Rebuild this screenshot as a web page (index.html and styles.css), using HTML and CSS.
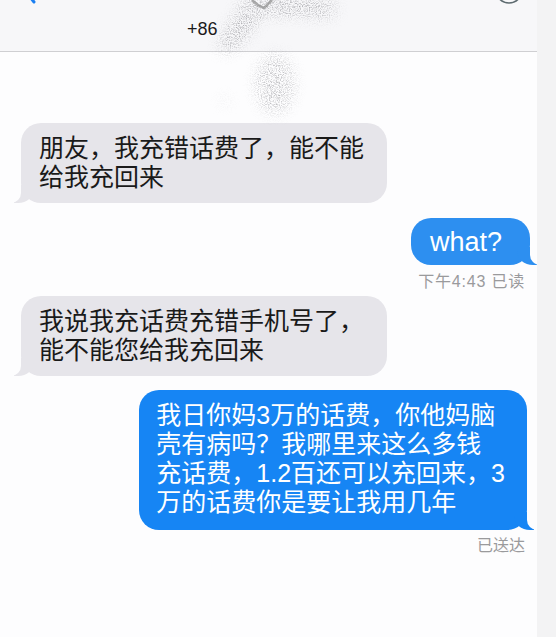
FILE: index.html
```html
<!DOCTYPE html>
<html lang="zh-CN">
<head>
<meta charset="utf-8">
<title>信息</title>
<link rel="stylesheet" href="styles.css">
</head>
<body>
<div class="screen">
  <div class="main">
    <header class="nav">
      <svg class="back" width="20" height="10" viewBox="0 0 20 10"><path d="M4 -8 L12 2" fill="none" stroke="#1b7ff2" stroke-width="3" stroke-linecap="round"/></svg>
      <span class="phone">+86</span>
      <svg class="info" width="34" height="10" viewBox="0 0 34 10"><circle cx="17" cy="-10" r="13" fill="none" stroke="#5e6b70" stroke-width="1.6"/></svg>
    </header>
    <section class="thread">
      <div class="msg them">朋友，我充错话费了，能不能<br>给我充回来</div>
      <div class="msg me short">what?</div>
      <div class="meta read">下午4:43 已读</div>
      <div class="msg them second">我说我充话费充错手机号了，<br>能不能您给我充回来</div>
      <div class="msg me long">我日你妈3万的话费，你他妈脑<br>壳有病吗？我哪里来这么多钱<br>充话费，1.2百还可以充回来，3<br>万的话费你是要让我用几年</div>
      <div class="meta delivered">已送达</div>
    </section>
    <svg class="smudge" width="160" height="125" viewBox="0 0 160 125">
      <defs>
        <filter id="speck" x="-20%" y="-20%" width="140%" height="140%" color-interpolation-filters="sRGB">
          <feTurbulence type="fractalNoise" baseFrequency="0.9" numOctaves="2" seed="11" result="noise"/>
          <feColorMatrix in="noise" type="matrix" values="0 0 0 0 0.55  0 0 0 0 0.55  0 0 0 0 0.57  2.4 0 0 0 -1.0" result="dots"/>
          <feGaussianBlur in="SourceAlpha" stdDeviation="7" result="soft"/>
          <feComposite in="dots" in2="soft" operator="in"/>
        </filter>
      </defs>
      <g filter="url(#speck)" opacity="0.8">
        <ellipse cx="92" cy="6" rx="50" ry="10"/>
        <ellipse cx="125" cy="14" rx="18" ry="5" opacity="0.6"/>
        <ellipse cx="45" cy="28" rx="11" ry="30" transform="rotate(38 45 28)"/>
        <ellipse cx="80" cy="84" rx="19" ry="30" opacity="0.8"/>
        <circle cx="30" cy="101" r="5" opacity="0.4"/>
      </g>
      <path d="M57 0 Q63 6 69 8 Q73 4 77 0" fill="none" stroke="#8a8a8a" stroke-width="2.5" opacity="0.7"/>
    </svg>
  </div>
  <div class="edge"></div>
</div>
</body>
</html>
```
FILE: styles.css
```css
html, body {
  margin: 0;
  padding: 0;
}

body {
  background: #fdfdfe;
  font-family: "Liberation Sans", "Noto Sans CJK SC", sans-serif;
}

.screen {
  display: flex;
  width: 556px;
  height: 637px;
  overflow: hidden;
}

.main {
  position: relative;
  flex: none;
  width: 537px;
  background: #fdfdfe;
  overflow: hidden;
}

.edge {
  flex: 1;
  background: #f3f3f4;
}

.nav {
  position: relative;
  height: 51px;
  background: #f7f7f9;
  border-bottom: 1px solid #cfcfd2;
  box-sizing: content-box;
}

.phone {
  position: absolute;
  left: 187px;
  top: 19px;
  font-size: 18px;
  line-height: 20px;
  color: #1a1a1a;
}

.back {
  position: absolute;
  left: 22px;
  top: 0;
}

.info {
  position: absolute;
  left: 492px;
  top: 0;
}

.thread {
  display: flex;
  flex-direction: column;
  align-items: flex-start;
  padding-top: 71px;
}

.msg {
  position: relative;
  font-size: 25px;
  line-height: 29px;
  border-radius: 20px;
  white-space: nowrap;
}

.msg::before,
.msg::after {
  content: "";
  position: absolute;
  bottom: 0;
}

.them {
  margin-left: 21px;
  width: 330px;
  padding: 11px 18px;
  background: #e6e5ea;
  color: #1a1a1a;
}

.them::before {
  left: -7px;
  width: 20px;
  height: 18px;
  background: #e6e5ea;
  border-bottom-right-radius: 16px 14px;
}

.them::after {
  left: -12px;
  width: 12px;
  height: 20px;
  background: #fdfdfe;
  border-bottom-right-radius: 10px;
}

.second {
  margin-top: 4px;
}

.me {
  align-self: flex-end;
  color: #fff;
}

.me::before {
  right: -7px;
  width: 20px;
  height: 18px;
  background: inherit;
  border-bottom-left-radius: 16px 14px;
}

.me::after {
  right: -12px;
  width: 12px;
  height: 20px;
  background: #fdfdfe;
  border-bottom-left-radius: 10px;
}

.short {
  margin-top: 15px;
  margin-right: 7px;
  padding: 10px 28px 8px 19px;
  font-size: 27px;
  background: #2d8ff0;
}

.long {
  margin-top: 14px;
  margin-right: 10px;
  padding: 11px 22px 13px 17px;
  background: #1685f4;
}

.meta {
  align-self: flex-end;
  margin-top: 7px;
  margin-right: 12px;
  font-size: 16px;
  line-height: 20px;
  color: #9a9a9c;
}

.read {
  letter-spacing: 0.8px;
}

.delivered {
  margin-top: 6px;
}

.smudge {
  position: absolute;
  left: 195px;
  top: 0;
}
```
